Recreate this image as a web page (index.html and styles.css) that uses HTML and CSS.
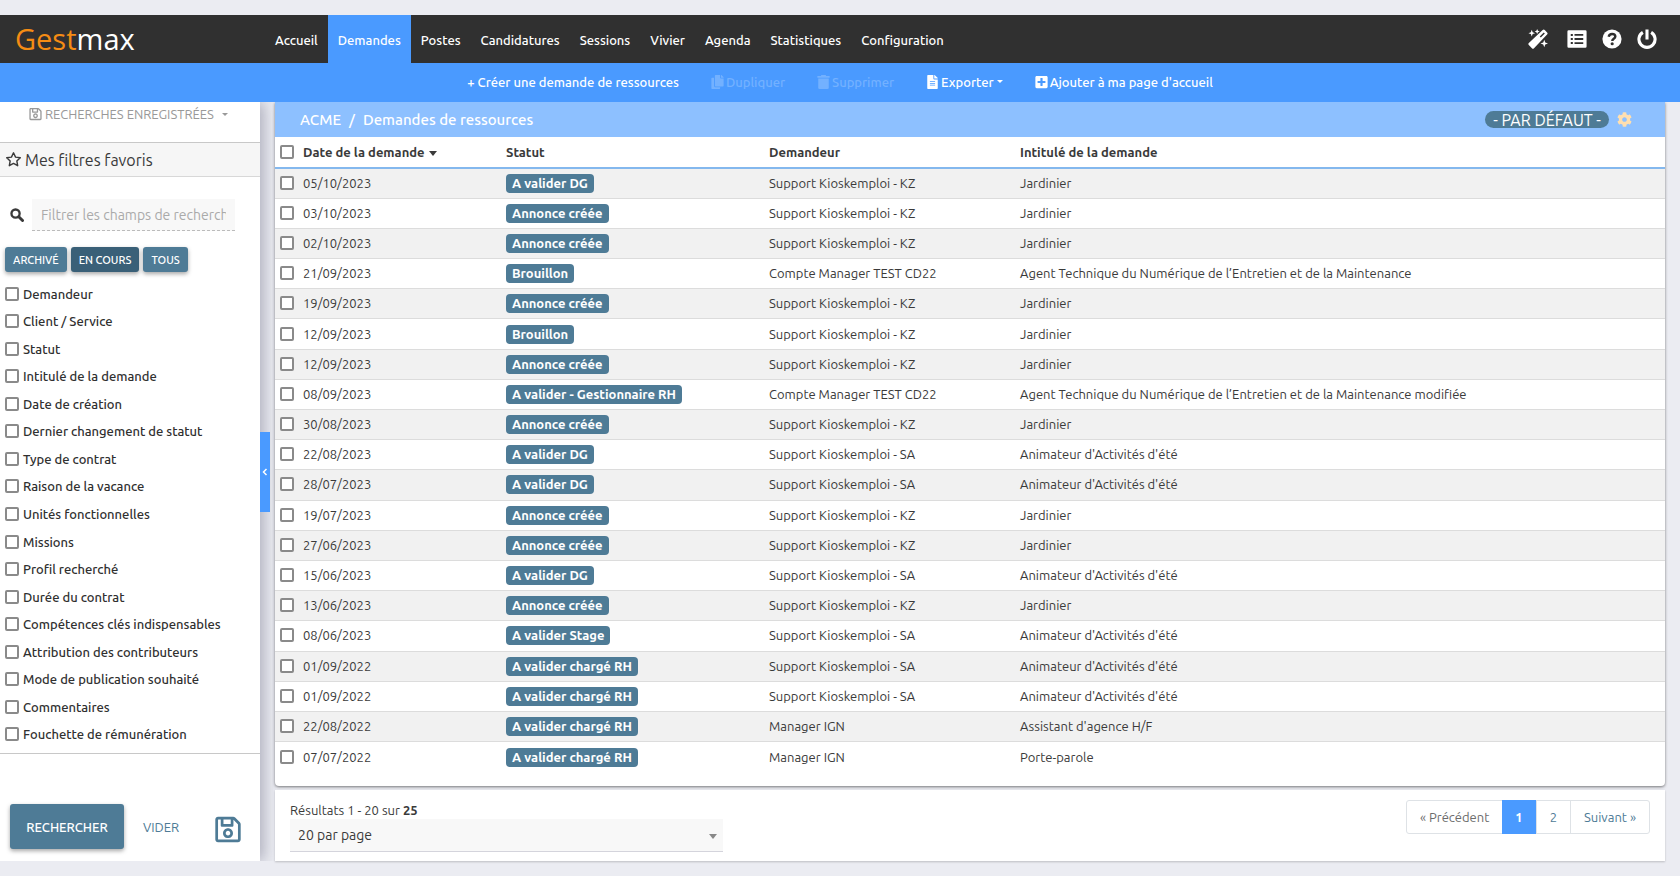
FILE: index.html
```html
<!DOCTYPE html>
<html lang="fr">
<head>
<meta charset="utf-8">
<title>Gestmax - Demandes de ressources</title>
<link rel="stylesheet" href="styles.css">
</head>
<body>
<svg class="sprite" aria-hidden="true">
  <symbol id="save" viewBox="0 0 448 512"><path d="M433.941 129.941l-83.882-83.882A48 48 0 0 0 316.118 32H48C21.49 32 0 53.49 0 80v352c0 26.51 21.49 48 48 48h352c26.51 0 48-21.49 48-48V163.882a48 48 0 0 0-14.059-33.941zM272 80v80H144V80h128zm122 352H54a6 6 0 0 1-6-6V86a6 6 0 0 1 6-6h42v104c0 13.255 10.745 24 24 24h176c13.255 0 24-10.745 24-24V83.882l78.243 78.243a6 6 0 0 1 1.757 4.243V426a6 6 0 0 1-6 6zM224 232c-48.523 0-88 39.477-88 88s39.477 88 88 88 88-39.477 88-88-39.477-88-88-88zm0 128c-22.056 0-40-17.944-40-40s17.944-40 40-40 40 17.944 40 40-17.944 40-40 40z"/></symbol>
  <symbol id="star" viewBox="0 0 24 24"><path d="M12 2.500l2.900 6.100 6.700.9-4.900 4.600 1.200 6.700-5.900-3.200-5.900 3.200 1.200-6.700L2.400 9.500l6.700-.9z" fill="none" stroke="currentColor" stroke-width="2" stroke-linejoin="round"/></symbol>
  <symbol id="search" viewBox="0 0 24 24"><circle cx="9.500" cy="9.500" r="7" fill="none" stroke="currentColor" stroke-width="4"/><path d="M15 15l6.500 6.500" stroke="currentColor" stroke-width="5" stroke-linecap="round"/></symbol>
  <symbol id="wand" viewBox="0 0 24 24"><path fill-rule="evenodd" d="M17.600 1.300a1.800 1.800 0 0 1 2.500 0l2.800 2.800a1.800 1.800 0 0 1 0 2.500L7.200 23a1.800 1.800 0 0 1-2.500 0L1 19.300a1.800 1.800 0 0 1 0-2.500zM18.900 4.200l-4.800 4.800 1.300 1.300 4.800-4.800z"/><path d="M4.500 1l1.100 2.900 2.900 1.100-2.900 1.100L4.500 9 3.400 6.100.5 5l2.900-1.100zM11 0l.9 2.100 2.100.9-2.100.9L11 6l-.9-2.100L8 3l2.100-.9zM19.500 13l1.200 3.300 3.300 1.200-3.300 1.200-1.200 3.300-1.200-3.300-3.300-1.200 3.300-1.200z"/></symbol>
  <symbol id="list" viewBox="0 0 24 24"><path fill-rule="evenodd" d="M2 1.500h20A1.500 1.500 0 0 1 23.500 3v18a1.500 1.500 0 0 1-1.500 1.500H2A1.500 1.500 0 0 1 .5 21V3A1.500 1.500 0 0 1 2 1.500zM4.500 6v2.500H7V6zm4.500 0v2.200h10.500V6zM4.500 10.700v2.500H7v-2.500zm4.500.2v2.200h10.500v-2.200zM4.500 15.500V18H7v-2.500zm4.500.3V18h10.500v-2.200z"/></symbol>
  <symbol id="help" viewBox="0 0 24 24"><circle cx="12" cy="12" r="11.500"/><path d="M8 9.200c.5-2.200 2-3.200 4.100-3.200 2.200 0 3.900 1.300 3.900 3.100 0 2.600-3.700 2.700-3.700 5.200" fill="none" stroke="#303030" stroke-width="2.900"/><circle cx="12.200" cy="17.700" r="1.900" fill="#303030"/></symbol>
  <symbol id="power" viewBox="0 0 24 24"><path d="M7 4a9.700 9.700 0 1 0 10 0M12 .5v12" fill="none" stroke="currentColor" stroke-width="3.700"/></symbol>
  <symbol id="copy" viewBox="0 0 448 512"><path d="M320 448v40c0 13.255-10.745 24-24 24H24c-13.255 0-24-10.745-24-24V120c0-13.255 10.745-24 24-24h72v296c0 30.879 25.121 56 56 56h168zm0-344V0H152c-13.255 0-24 10.745-24 24v368c0 13.255 10.745 24 24 24h272c13.255 0 24-10.745 24-24V128H344c-13.200 0-24-10.800-24-24zm120.971-31.029L375.029 7.029A24 24 0 0 0 358.059 0H352v96h96v-6.059a24 24 0 0 0-7.029-16.970z"/></symbol>
  <symbol id="trash" viewBox="0 0 448 512"><path d="M0 32h128l16-32h160l16 32h128v64H0zM32 128h384v336a48 48 0 0 1-48 48H80a48 48 0 0 1-48-48z"/></symbol>
  <symbol id="file" viewBox="0 0 384 512"><path d="M224 136V0H24C10.700 0 0 10.700 0 24v464c0 13.300 10.700 24 24 24h336c13.300 0 24-10.700 24-24V160H248c-13.200 0-24-10.800-24-24zm64 236c0 6.600-5.400 12-12 12H108c-6.600 0-12-5.400-12-12v-8c0-6.600 5.400-12 12-12h168c6.600 0 12 5.400 12 12v8zm0-64c0 6.600-5.400 12-12 12H108c-6.600 0-12-5.400-12-12v-8c0-6.600 5.400-12 12-12h168c6.600 0 12 5.400 12 12v8zm0-72v8c0 6.600-5.400 12-12 12H108c-6.600 0-12-5.400-12-12v-8c0-6.600 5.400-12 12-12h168c6.600 0 12 5.400 12 12zm96-114.100v6.100H256V0h6.100c6.400 0 12.500 2.500 17 7l97.900 98c4.500 4.500 7 10.600 7 16.900z"/></symbol>
  <symbol id="plus" viewBox="0 0 448 512"><path d="M400 32H48C21.500 32 0 53.500 0 80v352c0 26.500 21.500 48 48 48h352c26.500 0 48-21.500 48-48V80c0-26.500-21.500-48-48-48zm-32 252c0 6.600-5.400 12-12 12h-92v92c0 6.600-5.400 12-12 12h-56c-6.600 0-12-5.400-12-12v-92H92c-6.600 0-12-5.400-12-12v-56c0-6.600 5.400-12 12-12h92v-92c0-6.600 5.400-12 12-12h56c6.600 0 12 5.400 12 12v92h92c6.600 0 12 5.400 12 12v56z"/></symbol>
  <symbol id="gear" viewBox="0 0 512 512"><path d="M487.400 315.700l-42.600-24.600c4.300-23.200 4.300-47 0-70.200l42.600-24.600c4.900-2.800 7.100-8.600 5.500-14-11.100-35.600-30-67.800-54.700-94.600-3.800-4.100-10-5.100-14.800-2.300L380.800 110c-17.900-15.400-38.500-27.300-60.800-35.100V25.800c0-5.600-3.900-10.500-9.400-11.700-36.700-8.200-74.300-7.800-109.200 0-5.500 1.200-9.400 6.100-9.400 11.700V75c-22.200 7.900-42.800 19.800-60.800 35.100L88.700 85.500c-4.900-2.800-11-1.900-14.800 2.300-24.700 26.700-43.600 58.900-54.700 94.600-1.700 5.400.6 11.200 5.500 14L67.300 221c-4.300 23.200-4.300 47 0 70.200l-42.600 24.600c-4.900 2.800-7.100 8.600-5.500 14 11.100 35.600 30 67.800 54.700 94.600 3.800 4.100 10 5.100 14.800 2.300l42.600-24.600c17.900 15.400 38.500 27.300 60.800 35.100v49.200c0 5.600 3.900 10.500 9.400 11.700 36.700 8.200 74.300 7.800 109.200 0 5.500-1.200 9.400-6.100 9.400-11.700v-49.200c22.200-7.900 42.800-19.800 60.800-35.100l42.600 24.600c4.900 2.800 11 1.900 14.800-2.300 24.700-26.700 43.600-58.900 54.700-94.600 1.500-5.500-.7-11.300-5.600-14.100zM256 336c-44.100 0-80-35.900-80-80s35.900-80 80-80 80 35.900 80 80-35.900 80-80 80z"/></symbol>
  <symbol id="chevron" viewBox="0 0 8 10"><path d="M6 1L2 5l4 4" fill="none" stroke="currentColor" stroke-width="2"/></symbol>
</svg>

<header class="navbar">
  <a class="logo" href="#"><span class="logo-accent">Gest</span>max</a>
  <nav class="menu">
    <a href="#">Accueil</a><a href="#" class="active">Demandes</a><a href="#">Postes</a><a href="#">Candidatures</a><a href="#">Sessions</a><a href="#">Vivier</a><a href="#">Agenda</a><a href="#">Statistiques</a><a href="#">Configuration</a>
  </nav>
  <div class="tools">
    <button aria-label="Assistant"><svg><use href="#wand"/></svg></button>
    <button aria-label="Liste"><svg><use href="#list"/></svg></button>
    <button aria-label="Aide"><svg><use href="#help"/></svg></button>
    <button aria-label="Déconnexion"><svg><use href="#power"/></svg></button>
  </div>
</header>
<div class="actions">
  <button>+ Créer une demande de ressources</button>
  <button disabled><svg><use href="#copy"/></svg>Dupliquer</button>
  <button disabled><svg><use href="#trash"/></svg>Supprimer</button>
  <button><svg><use href="#file"/></svg>Exporter<i class="caret"></i></button>
  <button><svg><use href="#plus"/></svg>Ajouter à ma page d'accueil</button>
</div>

<div class="page">
  <aside class="sidebar">
    <button class="saved"><svg><use href="#save"/></svg>RECHERCHES ENREGISTRÉES<i class="caret"></i></button>
    <h2 class="favorites"><svg><use href="#star"/></svg>Mes filtres favoris</h2>
    <div class="filter-search">
      <label for="filter" aria-label="Filtrer"><svg><use href="#search"/></svg></label>
      <input id="filter" type="text" placeholder="Filtrer les champs de recherche">
    </div>
    <div class="scopes"><button>ARCHIVÉ</button><button class="selected">EN COURS</button><button>TOUS</button></div>
    <div class="filters">
      <label><input type="checkbox">Demandeur</label>
      <label><input type="checkbox">Client / Service</label>
      <label><input type="checkbox">Statut</label>
      <label><input type="checkbox">Intitulé de la demande</label>
      <label><input type="checkbox">Date de création</label>
      <label><input type="checkbox">Dernier changement de statut</label>
      <label><input type="checkbox">Type de contrat</label>
      <label><input type="checkbox">Raison de la vacance</label>
      <label><input type="checkbox">Unités fonctionnelles</label>
      <label><input type="checkbox">Missions</label>
      <label><input type="checkbox">Profil recherché</label>
      <label><input type="checkbox">Durée du contrat</label>
      <label><input type="checkbox">Compétences clés indispensables</label>
      <label><input type="checkbox">Attribution des contributeurs</label>
      <label><input type="checkbox">Mode de publication souhaité</label>
      <label><input type="checkbox">Commentaires</label>
      <label><input type="checkbox">Fouchette de rémunération</label>
    </div>
    <div class="sidebar-footer">
      <button class="primary">RECHERCHER</button>
      <button class="clear">VIDER</button>
      <button class="store" aria-label="Enregistrer"><svg><use href="#save"/></svg></button>
    </div>
  </aside>
  <div class="gutter"><button class="collapse" aria-label="Replier"><svg><use href="#chevron"/></svg></button></div>

  <main class="content">
    <section class="card">
      <div class="card-head">
        <div class="crumbs"><a href="#">ACME</a><span>/</span><span>Demandes de ressources</span></div>
        <button class="view">- PAR DÉFAUT -</button>
        <button class="settings" aria-label="Paramètres"><svg><use href="#gear"/></svg></button>
      </div>
      <table>
        <colgroup><col class="c-check"><col class="c-date"><col class="c-status"><col class="c-owner"><col></colgroup>
        <thead><tr><th><input type="checkbox" aria-label="Tout sélectionner"></th><th>Date de la demande<i class="caret sort"></i></th><th>Statut</th><th>Demandeur</th><th>Intitulé de la demande</th></tr></thead>
        <tbody id="rows"></tbody>
      </table>
    </section>
    <section class="pager">
      <div class="results">
        <label for="size">Résultats 1 - 20 sur <b>25</b></label>
        <div class="select"><select id="size"><option>20 par page</option></select><i class="caret"></i></div>
      </div>
      <nav class="pages"><a class="muted" href="#">« Précédent</a><a class="current" href="#">1</a><a href="#">2</a><a href="#">Suivant »</a></nav>
    </section>
  </main>
</div>
<script src="rows.js"></script>
</body>
</html>
```
FILE: rows.js
```js
const kz = 'Support Kioskemploi - KZ';
const sa = 'Support Kioskemploi - SA';
const cd = 'Compte Manager TEST CD22';
const summer = "Animateur d'Activités d'été";
const agent = "Agent Technique du Numérique de l’Entretien et de la Maintenance";
const rows = [
  ['05/10/2023', 'A valider DG', kz, 'Jardinier'],
  ['03/10/2023', 'Annonce créée', kz, 'Jardinier'],
  ['02/10/2023', 'Annonce créée', kz, 'Jardinier'],
  ['21/09/2023', 'Brouillon', cd, agent],
  ['19/09/2023', 'Annonce créée', kz, 'Jardinier'],
  ['12/09/2023', 'Brouillon', kz, 'Jardinier'],
  ['12/09/2023', 'Annonce créée', kz, 'Jardinier'],
  ['08/09/2023', 'A valider - Gestionnaire RH', cd, agent + ' modifiée'],
  ['30/08/2023', 'Annonce créée', kz, 'Jardinier'],
  ['22/08/2023', 'A valider DG', sa, summer],
  ['28/07/2023', 'A valider DG', sa, summer],
  ['19/07/2023', 'Annonce créée', kz, 'Jardinier'],
  ['27/06/2023', 'Annonce créée', kz, 'Jardinier'],
  ['15/06/2023', 'A valider DG', sa, summer],
  ['13/06/2023', 'Annonce créée', kz, 'Jardinier'],
  ['08/06/2023', 'A valider Stage', sa, summer],
  ['01/09/2022', 'A valider chargé RH', sa, summer],
  ['01/09/2022', 'A valider chargé RH', sa, summer],
  ['22/08/2022', 'A valider chargé RH', 'Manager IGN', "Assistant d'agence H/F"],
  ['07/07/2022', 'A valider chargé RH', 'Manager IGN', 'Porte-parole']
];
document.getElementById('rows').innerHTML = rows.map(([date, status, owner, title]) =>
  `<tr><td><input type="checkbox" aria-label="Sélectionner ${date}"></td><td>${date}</td><td><span class="badge">${status}</span></td><td>${owner}</td><td>${title}</td></tr>`
).join('');
```
FILE: styles.css
```css
* { box-sizing: border-box; }
body {
  margin: 0;
  padding: 15px 0;
  min-height: 100vh;
  display: flex;
  flex-direction: column;
  background: #ebecf2;
  color: #3a3a3a;
  font: 13px/20px Ubuntu, "Noto Sans", sans-serif;
}
button, input, select { font: inherit; color: inherit; }
button { border: 0; padding: 0; background: none; display: inline-flex; align-items: center; justify-content: center; }
a { color: inherit; text-decoration: none; }
svg { fill: currentColor; display: block; flex: none; }
.sprite { position: absolute; width: 0; height: 0; }
.caret { flex: none; display: inline-block; border: 3px solid transparent; border-top-color: currentColor; border-bottom: 0; }

.navbar { display: flex; height: 48px; background: #303030; color: #fff; }
.logo { width: 265px; padding-left: 15px; font: 29px/48px "Open Sans", sans-serif; }
.logo-accent { color: #f58c14; }
.menu { display: flex; flex: 1; font-weight: 500; }
.menu a { padding: 0 10px; line-height: 50px; }
.menu .active { background: #4a9aff; }
.tools { display: flex; align-items: center; gap: 15px; padding-right: 23px; }
.tools svg { width: 20px; height: 20px; }
.tools button:first-child { margin-right: 4px; }
.actions { display: flex; justify-content: center; gap: 32px; height: 39px; padding-bottom: 2px; background: #4a9aff; color: #fff; font-weight: 500; }
.actions svg { width: 13px; height: 14px; margin-right: 2px; }
.actions .caret { margin-left: 3px; }
.actions button:disabled { color: #73b1ff; }

.page { flex: 1; display: flex; }
.sidebar { width: 260px; background: #fff; display: flex; flex-direction: column; box-shadow: 4px 0 14px rgba(60, 60, 90, .35); clip-path: inset(0 -16px 0 0); }
.saved { height: 40px; padding: 0 28px 16px 29px; justify-content: flex-start; color: #999; }
.saved svg { width: 13px; height: 14px; margin-right: 3px; }
.saved .caret { margin-left: 8px; }
.favorites { display: flex; align-items: center; gap: 3px; height: 35px; margin: 0; padding-left: 5px; font-size: 16px; font-weight: 400; background: #f6f6f6; border-top: 1px solid #c8c8c8; border-bottom: 1px solid #d8d8d8; }
.favorites svg { width: 17px; height: 17px; }
.filter-search { display: flex; align-items: center; gap: 8px; padding: 22px 25px 16px 10px; }
.filter-search svg { width: 14px; height: 14px; }
.filter-search input { flex: 1; min-width: 0; height: 32px; padding: 0 9px; border: 0; border-bottom: 1px dashed #bbb; background: #f8f8f8; font-size: 14px; }
.filter-search input::placeholder { color: #aaa; }
.scopes { display: flex; gap: 4px; padding: 0 5px 8px; }
.scopes button { height: 25px; padding: 0 8px; border-radius: 3px; background: #4e7b96; color: #fff; font-size: 11px; font-weight: 500; box-shadow: 0 2px 4px rgba(0, 0, 0, .35); }
.scopes .selected { background: #3a6078; }
.filters { flex: 1; display: grid; grid-auto-rows: 1fr; padding-bottom: 5px; border-bottom: 1px solid #c8c8c8; color: #303030; font-weight: 500; }
.filters label { display: flex; align-items: center; gap: 4px; padding-left: 5px; }
input[type=checkbox] { appearance: none; display: block; flex: none; width: 14px; height: 14px; margin: 0; border: 2px solid #8a8a8a; border-radius: 2px; background: #fff; }
.sidebar-footer { display: flex; align-items: center; padding: 50px 18px 12px 10px; }
.primary { width: 114px; height: 45px; border-radius: 3px; background: #4e7b96; color: #fff; font-weight: 500; box-shadow: 0 2px 4px rgba(0, 0, 0, .35); }
.clear { margin-left: 19px; color: #4e7b96; }
.store { margin-left: auto; padding-top: 5px; color: #4e7b96; }
.store svg { width: 28px; height: 29px; }
.gutter { width: 15px; display: flex; align-items: center; z-index: 1; }
.collapse { width: 10px; height: 80px; margin-bottom: 20px; background: #4a9aff; color: #fff; }
.collapse svg { width: 6px; height: 8px; }

.content { flex: 1; min-width: 0; display: flex; flex-direction: column; gap: 4px; padding-right: 15px; z-index: 1; }
.card { flex: 1; display: flex; flex-direction: column; padding-bottom: 14px; background: #fff; border-radius: 0 0 4px 4px; box-shadow: 0 1px 3px rgba(0, 0, 0, .5); clip-path: inset(0 -5px -5px -5px); }
.card-head { display: flex; align-items: center; height: 35px; padding: 0 33px 0 25px; background: #8dc0ff; color: #fff; font-size: 15px; font-weight: 500; }
.crumbs { flex: 1; display: flex; gap: 8px; }
.view { height: 17px; padding: 0 8px; border-radius: 9px; background: #4e7b96; font-size: 16px; font-weight: 400; }
.settings { margin-left: 8px; color: #ffdfb0; }
.settings svg { width: 15px; height: 15px; }
table { flex: 1; width: 100%; table-layout: fixed; border-collapse: collapse; }
th { height: 31px; text-align: left; padding: 0 0 1px; border-bottom: 2px solid #84b8ee; }
td { height: 30px; padding: 0 0 1px; border-top: 1px solid #dcdcdc; }
th:first-child, td:first-child { padding-left: 5px; }
tbody tr:nth-child(odd) { background: #f1f1f1; }
.c-check { width: 28px; }
.c-date { width: 203px; }
.c-status { width: 263px; }
.c-owner { width: 251px; }
.sort { border-width: 5px 4px 0; margin-left: 4px; vertical-align: middle; }
.badge { display: inline-block; padding: 0 6px; border-radius: 4px; background: #4e7b96; color: #fff; font-weight: 700; line-height: 19px; }
.pager { display: flex; justify-content: space-between; align-items: flex-start; height: 71px; padding: 10px 15px; background: #fff; box-shadow: 0 1px 2px rgba(0, 0, 0, .2); }
.results { width: 433px; }
.results label { display: block; height: 19px; }
.select { position: relative; }
.select select { appearance: none; width: 100%; height: 33px; padding: 0 8px; border: 0; border-bottom: 1px solid #d4d4dc; border-radius: 0; background: #f8f8f8; font-size: 14px; }
.select .caret { position: absolute; right: 6px; top: 15px; border-width: 5px 4px 0; color: #888; }
.pages { display: flex; border: 1px solid #dee2e6; border-radius: 3px; color: #4e7b96; line-height: 32px; }
.pages a { padding: 0 13px; border-left: 1px solid #dee2e6; }
.pages a:first-child { border-left: 0; }
.pages .muted { color: #6c6c6c; }
.pages .current { margin: -1px 0; background: #4a9aff; color: #fff; line-height: 34px; font-weight: 700; border: 0; }
```
